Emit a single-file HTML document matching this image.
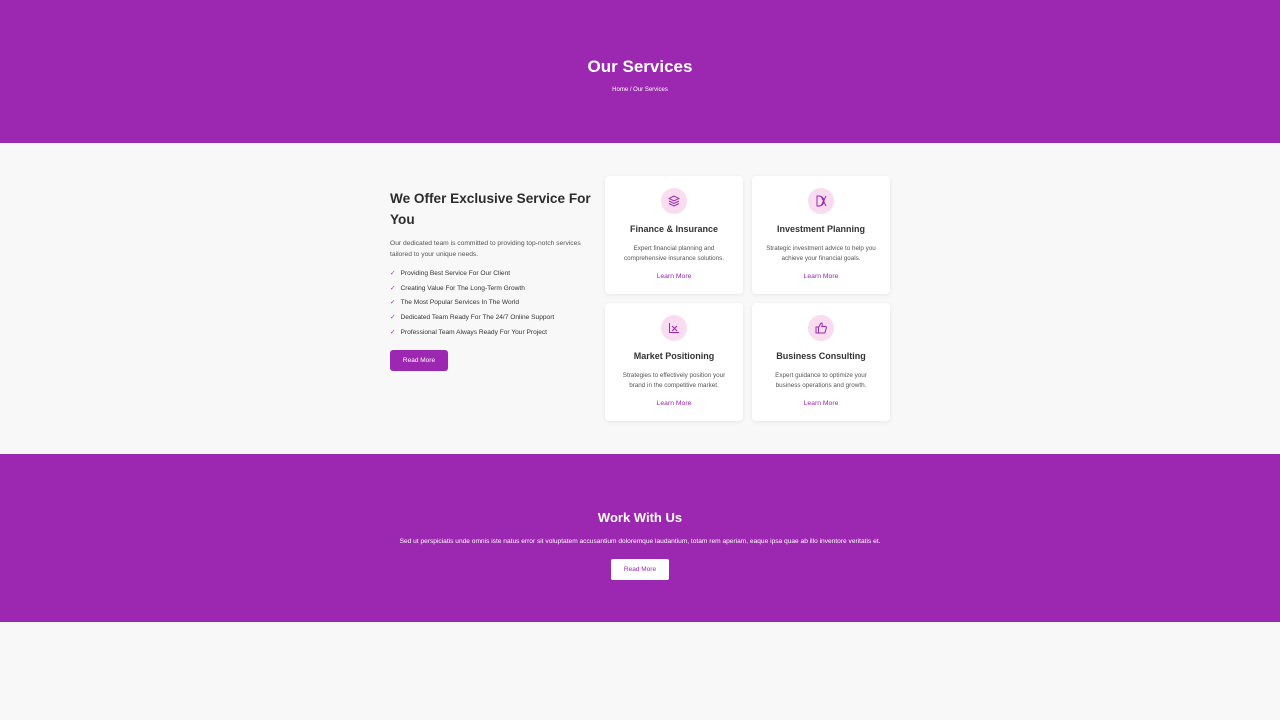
<!DOCTYPE html>
<html><head><meta charset="utf-8"><style>
*{margin:0;padding:0;box-sizing:border-box}
body{width:1280px;height:720px;background:#f8f8f8;font-family:"Liberation Sans",sans-serif;color:#333;position:relative;overflow:hidden}
.abs{position:absolute}
.banner{left:0;top:0;width:1280px;height:143px;background:#9c27b0;color:#fff;text-align:center}
.work{left:0;top:454px;width:1280px;height:168px;background:#9c27b0;color:#fff;text-align:center}
.card{background:#fff;border-radius:4px;box-shadow:0 1px 4px rgba(0,0,0,.08);width:138px;height:118px;text-align:center}
.ic{position:absolute;left:56px;top:12px;width:26px;height:26px;border-radius:50%;background:#f9dcef}
.ic svg{position:absolute;left:7px;top:7px}
.card h3{position:absolute;top:48px;left:0;width:100%;font-size:9px;font-weight:bold;color:#333}
.card p{position:absolute;top:68px;left:0;width:100%;font-size:6.3px;line-height:10px;color:#555;padding:0 12px}
.card a{position:absolute;display:block;top:97px;left:0;width:100%;font-size:6.8px;color:#9c27b0}
.li{position:absolute;left:390px;font-size:6.6px;color:#333}
.li span{color:#9c27b0;margin-right:5px}
</style></head><body>
<div class="abs banner">
<div class="abs" style="top:57px;width:100%;font-size:17px;font-weight:bold">Our Services</div>
<div class="abs" style="top:87px;width:100%;font-size:6px">Home / Our Services</div>
</div>
<div class="abs" style="left:390px;top:188px;width:205px;font-size:13.6px;font-weight:bold;line-height:21px;color:#2d2d2d">We Offer Exclusive Service For You</div>
<div class="abs" style="left:390px;top:238px;width:205px;font-size:6.7px;line-height:11px;color:#555">Our dedicated team is committed to providing top-notch services tailored to your unique needs.</div>
<div class="li" style="top:269px"><span>✓</span>Providing Best Service For Our Client</div>
<div class="li" style="top:284px"><span>✓</span>Creating Value For The Long-Term Growth</div>
<div class="li" style="top:298px"><span>✓</span>The Most Popular Services In The World</div>
<div class="li" style="top:313px"><span>✓</span>Dedicated Team Ready For The 24/7 Online Support</div>
<div class="li" style="top:328px"><span>✓</span>Professional Team Always Ready For Your Project</div>
<div class="abs" style="left:390px;top:350px;width:58px;height:21px;background:#9c27b0;border-radius:3px;color:#fff;font-size:6.5px;text-align:center;line-height:21px">Read More</div>

<div class="abs card" style="left:605px;top:176px"><div class="ic"><svg width="12" height="12" viewBox="0 0 12 12" fill="none" stroke="#9c27b0" stroke-width="1"><path d="M6 1L1 3.5 6 6l5-2.5z M1 6l5 2.5L11 6 M1 8.5L6 11l5-2.5"/></svg></div><h3>Finance &amp; Insurance</h3><p>Expert financial planning and comprehensive insurance solutions.</p><a>Learn More</a></div>
<div class="abs card" style="left:752px;top:176px"><div class="ic"><svg width="12" height="12" viewBox="0 0 12 12" fill="none" stroke="#9c27b0" stroke-width="1"><path d="M2 1v10h2a4 4 0 0 0 0-10z M6 1l5 10 M11 1L6 11"/></svg></div><h3>Investment Planning</h3><p>Strategic investment advice to help you achieve your financial goals.</p><a>Learn More</a></div>
<div class="abs card" style="left:605px;top:303px"><div class="ic"><svg width="12" height="12" viewBox="0 0 12 12" fill="none" stroke="#9c27b0" stroke-width="1"><path d="M1.5 1v9.5H11 M4 4l5 5 M9 4L4 9"/></svg></div><h3>Market Positioning</h3><p>Strategies to effectively position your brand in the competitive market.</p><a>Learn More</a></div>
<div class="abs card" style="left:752px;top:303px"><div class="ic"><svg width="12" height="12" viewBox="0 0 12 12" fill="none" stroke="#9c27b0" stroke-width="1"><path d="M1 5h2.5v6H1z M3.5 5.5L6 1c1.2 0 1.5 1 1.2 2L6.8 4.5H10.5c.7 0 1 .6.8 1.2l-1.2 4.5c-.2.5-.5.8-1 .8H3.5"/></svg></div><h3>Business Consulting</h3><p>Expert guidance to optimize your business operations and growth.</p><a>Learn More</a></div>

<div class="abs work">
<div class="abs" style="top:56px;width:100%;font-size:13px;font-weight:bold">Work With Us</div>
<div class="abs" style="top:84px;width:100%;font-size:6.6px">Sed ut perspiciatis unde omnis iste natus error sit voluptatem accusantium doloremque laudantium, totam rem aperiam, eaque ipsa quae ab illo inventore veritatis et.</div>
<div class="abs" style="left:611px;top:105px;width:58px;height:21px;background:#fff;border-radius:2px;color:#9c27b0;font-size:6.5px;line-height:21px">Read More</div>
</div>
</body></html>
